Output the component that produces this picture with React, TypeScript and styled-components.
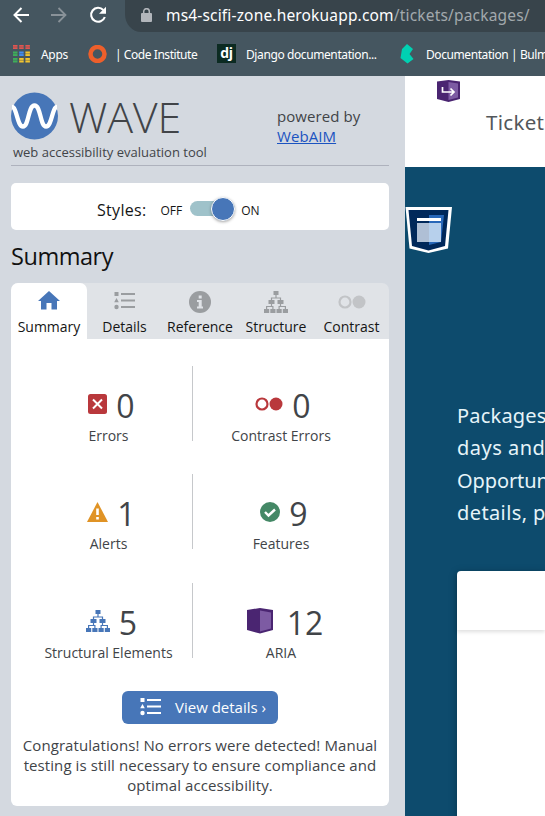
import React from "react";
import styled, { createGlobalStyle } from "styled-components";

const Global = createGlobalStyle`
  * { box-sizing: border-box; }
  body { margin: 0; overflow: hidden; font-family: "Open Sans", sans-serif; }
  h1, h2, p { margin: 0; font-weight: 400; }
  svg { display: block; flex: none; }
`;

const Window = styled.div`
  width: 545px;
  height: 816px;
  display: flex;
  flex-direction: column;
  overflow: hidden;
`;

const Chrome = styled.header`
  height: 76px;
  flex: none;
  background: #455660;
  color: #fff;
  font-family: "Noto Sans", sans-serif;
`;

const Toolbar = styled.div`
  display: flex;
  height: 32px;
  padding-left: 13px;
`;

const NavIcons = styled.div`
  display: flex;
  align-items: center;
  gap: 22px;
  width: 112px;
  height: 30px;
`;

const AddressBar = styled.div`
  flex: 1;
  display: flex;
  align-items: center;
  height: 32px;
  padding: 0 0 2px 16px;
  gap: 14px;
  background: #38444b;
  border-radius: 0 0 0 16px / 0 0 0 18px;
  white-space: nowrap;
`;

const Url = styled.span`
  font-size: 15.5px;
  letter-spacing: 0.17px;
  color: #fff;
`;

const UrlPath = styled.span`
  color: #a2a9ad;
  letter-spacing: 0.18px;
`;

const Bookmarks = styled.nav`
  display: flex;
  height: 44px;
  padding-left: 12px;
`;

const Bookmark = styled.div<{ $width: number; $gap: number; $spacing: number }>`
  display: flex;
  align-items: center;
  flex: none;
  width: ${(p) => p.$width}px;
  gap: ${(p) => p.$gap}px;
  height: 44px;
  padding-bottom: 1px;
  font-size: 12px;
  letter-spacing: ${(p) => p.$spacing}px;
  white-space: nowrap;
`;

const BookmarkLabel = styled.span`
  padding-top: 2px;
`;

const DjangoMark = styled.span`
  display: flex;
  justify-content: center;
  width: 19px;
  height: 19px;
  background: #0c2b22;
  font: 700 14px/17px "Open Sans", sans-serif;
`;

const Content = styled.div`
  display: flex;
  flex: 1;
  min-height: 0;
`;

const Sidebar = styled.aside`
  width: 405px;
  flex: none;
  padding: 0 16px 0 11px;
  background: #d4d9e0;
  color: #414448;
`;

const Brand = styled.div`
  display: flex;
  height: 90px;
  border-bottom: 1px solid #aeb2bd;
`;

const BrandLeft = styled.div`
  width: 266px;
  padding-top: 16px;
`;

const LogoRow = styled.div`
  display: flex;
  align-items: center;
  gap: 10px;
  height: 48px;
`;

const LogoName = styled.h1`
  height: 48px;
  font-size: 43px;
  font-weight: 300;
  line-height: 50px;
  letter-spacing: -0.2px;
`;

const Tagline = styled.p`
  padding-left: 2px;
  margin-top: 3px;
  font-size: 13px;
  line-height: 18px;
`;

const Powered = styled.div`
  padding-top: 30px;
  font-size: 15px;
  line-height: 20px;
  letter-spacing: 0.08px;
  white-space: nowrap;
`;

const Link = styled.a`
  display: block;
  color: #1a53c0;
  text-decoration: underline;
`;

const StylesBox = styled.section`
  display: flex;
  align-items: center;
  height: 47px;
  margin-top: 17px;
  padding: 6px 0 0 86px;
  background: #fff;
  border-radius: 5px;
  color: #151515;
  font-size: 16px;
  letter-spacing: 0.3px;
`;

const SmallLabel = styled.span<{ $left: number }>`
  margin-left: ${(p) => p.$left}px;
  padding-top: 1px;
  font-size: 12px;
  letter-spacing: 0;
`;

const Track = styled.div`
  display: flex;
  justify-content: flex-end;
  align-items: center;
  width: 45px;
  height: 15px;
  margin: -2px 0 0 8px;
  border-radius: 8px;
  background: #9fc2ca;
`;

const Knob = styled.div`
  width: 24px;
  height: 24px;
  flex: none;
  border: 1px solid #fff;
  border-radius: 50%;
  background: #4776b8;
  box-shadow: 0 1px 3px rgba(0, 0, 0, 0.35);
`;

const Heading = styled.h2`
  height: 53px;
  font-size: 23.5px;
  line-height: 53px;
  letter-spacing: -0.45px;
  color: #111;
`;

const Tabs = styled.div`
  display: grid;
  grid-template-columns: 76px 75px 76px 76px 75px;
  height: 56px;
  background: #e0e3e7;
  border-radius: 7px 7px 0 0;
`;

const Tab = styled.div<{ $active?: boolean }>`
  display: flex;
  flex-direction: column;
  align-items: center;
  padding-top: 7px;
  background: ${(p) => (p.$active ? "#fff" : "transparent")};
  border-radius: 7px 7px 0 0;
  color: #151515;
  font-size: 14px;
  line-height: 20px;
  white-space: nowrap;
`;

const TabIcon = styled.div<{ $lift?: number }>`
  display: flex;
  align-items: center;
  height: 24px;
  margin-bottom: 3px;
  padding-bottom: ${(p) => p.$lift ?? 0}px;
`;

const Panel = styled.section`
  height: 467px;
  padding-top: 27px;
  background: #fff;
  border-radius: 0 0 6px 6px;
`;

const StatRow = styled.div`
  display: grid;
  grid-template-columns: 182px 1fr;
  height: 75px;
  margin-bottom: 33.4px;
`;

const Stat = styled.div<{ $divided?: boolean }>`
  height: 75px;
  padding-top: 17px;
  padding-left: ${(p) => (p.$divided ? 13 : 14)}px;
  border-right: ${(p) => (p.$divided ? "0" : "1px solid #c6c8cb")};
  margin-right: ${(p) => (p.$divided ? 33 : 0)}px;
  text-align: center;
  font-size: 14px;
  white-space: nowrap;
`;

const StatLine = styled.div<{ $gap: number; $shift: number }>`
  display: flex;
  justify-content: center;
  align-items: center;
  gap: ${(p) => p.$gap}px;
  height: 42px;
  margin: 0 ${(p) => -p.$shift}px 0 ${(p) => p.$shift}px;
`;

const Count = styled.span`
  font-size: 32px;
  line-height: 41px;
  padding-top: 3px;
`;

const StatLabel = styled.div`
  padding-top: 1px;
  line-height: 20px;
`;

const DetailsButton = styled.button`
  display: flex;
  align-items: center;
  gap: 14px;
  width: 156px;
  height: 33px;
  margin: 0 0 0 111px;
  padding: 0 0 2px 18px;
  border: 0;
  border-radius: 6px;
  background: #4776b8;
  color: #fff;
  font: 15px "Open Sans", sans-serif;
  white-space: nowrap;
`;

const Message = styled.p`
  margin: 11px -2px 0;
  text-align: center;
  font-size: 15px;
  line-height: 20px;
  letter-spacing: 0.08px;
  white-space: nowrap;
`;

const Site = styled.main`
  position: relative;
  flex: 1;
  min-width: 0;
  background: #0d4b6d;
  overflow: hidden;
  white-space: nowrap;
`;

const SiteNav = styled.div`
  height: 91px;
  padding: 31px 0 0 81px;
  background: #fff;
  color: #53575b;
  font: 20.5px/30px "Noto Sans", sans-serif;
  letter-spacing: 0.3px;
`;

const Marker = styled.div<{ $x: number; $y: number }>`
  position: absolute;
  left: ${(p) => p.$x}px;
  top: ${(p) => p.$y}px;
`;

const Intro = styled.p`
  height: 130px;
  margin: 233px 0 0 52px;
  color: #e6f4f9;
  font: 20px/32.4px "Noto Sans", sans-serif;
`;

const IntroLine = styled.span<{ $spacing: number }>`
  display: block;
  letter-spacing: ${(p) => p.$spacing}px;
`;

const Card = styled.div`
  height: 300px;
  margin: 41px 0 0 52px;
  background: #fff;
  border-radius: 4px 0 0 0;
  box-shadow: 0 2px 9px rgba(0, 0, 0, 0.28);
`;

const CardHeader = styled.div`
  height: 59px;
  box-shadow: 0 2px 4px rgba(0, 0, 0, 0.13);
`;

const ListIcon = ({ color }: { color: string }) => (
  <svg width="21" height="19" viewBox="0 0 21 19" fill={color}>
    <path d="M.5 1h4v4h-4zM2.500 7l2.300 4.200H.2zM7 2h14v2H7zM7 8.500h14v2H7zM7 15h14v2H7z" />
    <circle cx="2.500" cy="16" r="2.200" />
  </svg>
);

const TreeIcon = ({ color }: { color: string }) => (
  <svg width="24" height="22" viewBox="0 0 24 22" fill={color}>
    <path d="M9.500 0h5v4h-5zM4.500 9h6v4h-6zM13.500 9h6v4h-6zM0 18h5.200v4H0zM6.300 18h5.200v4H6.300zM12.500 18h5.200v4h-5.200zM18.800 18H24v4h-5.200z" />
    <path d="M12 4v3M7.500 10V7h9v3M7.500 13v2.500M2.600 18v-2.500h6.300V18M16.500 13v2.500M15.100 18v-2.500h6.300V18" fill="none" stroke={color} strokeWidth="1.200" />
  </svg>
);

const ContrastIcon = ({ ring, fill }: { ring: string; fill: string }) => (
  <svg width="28" height="14" viewBox="0 0 28 14">
    <circle cx="7" cy="7" r="5.500" fill="none" stroke={ring} strokeWidth="2.200" />
    <circle cx="21" cy="7" r="6.500" fill={fill} />
  </svg>
);

const BackIcon = () => (
  <svg width="16" height="16" viewBox="0 0 16 16" fill="none" stroke="#fff" strokeWidth="2">
    <path d="M16 8H2M8.500 1L1.500 8l7 7" />
  </svg>
);

const ForwardIcon = () => (
  <svg width="16" height="16" viewBox="0 0 16 16" fill="none" stroke="#899299" strokeWidth="1.800">
    <path d="M0 8h14M7.500 1l7 7-7 7" />
  </svg>
);

const ReloadIcon = () => (
  <svg width="18" height="18" viewBox="0 0 18 18">
    <path d="M14.300 4A7 7 0 1 0 15.800 11" fill="none" stroke="#fff" strokeWidth="2.100" />
    <path d="M17 .8v7h-7z" fill="#fff" />
  </svg>
);

const LockIcon = () => (
  <svg width="11" height="14" viewBox="0 0 11 14">
    <path d="M2.700 6V3.500a2.800 2.800 0 0 1 5.600 0V6" fill="none" stroke="#b2b6bb" strokeWidth="1.500" />
    <rect y="5" width="11" height="9" rx="1" fill="#b2b6bb" />
  </svg>
);

const AppsIcon = () => (
  <svg width="19" height="18" viewBox="0 0 19 18">
    <path d="M1 0h4.500v4H1zM7.200 0h4.500v4H7.200zM13.400 0h4.500v4h-4.500z" fill="#e15550" />
    <path d="M1 6.500h4.500v4.500H1zM1 13h4.500v4.500H1z" fill="#3fae5a" />
    <path d="M7.200 6.500h4.500v4.500H7.200z" fill="#438df0" />
    <path d="M7.200 13h4.500v4.500H7.200zM13.400 6.500h4.500v4.500h-4.500zM13.400 13h4.500v4.500h-4.500z" fill="#f3c52f" />
    <path d="M1 2h17M1 8.700h17M1 15.300h17" stroke="#455660" strokeWidth=".7" opacity=".65" />
  </svg>
);

const WaveLogo = () => (
  <svg width="48" height="48" viewBox="0 0 48 48">
    <circle cx="23.500" cy="24" r="23.500" fill="#4776b8" />
    <path d="M1 15C6 15 6 34.500 12 34.500C18 34.500 17 13.500 23.500 13.500C30 13.500 29 34.500 35 34.500C41 34.500 41 15 46 15" fill="none" stroke="#fff" strokeWidth="4.300" />
  </svg>
);

const App = () => (
  <Window>
    <Global />
    <Chrome>
      <Toolbar>
        <NavIcons>
          <BackIcon />
          <ForwardIcon />
          <ReloadIcon />
        </NavIcons>
        <AddressBar>
          <LockIcon />
          <Url>ms4-scifi-zone.herokuapp.com<UrlPath>/tickets/packages/</UrlPath></Url>
        </AddressBar>
      </Toolbar>
      <Bookmarks>
        <Bookmark $width={76} $gap={10} $spacing={-0.3}><AppsIcon /><BookmarkLabel>Apps</BookmarkLabel></Bookmark>
        <Bookmark $width={129} $gap={8} $spacing={-0.44}>
          <svg width="19" height="18" viewBox="0 0 19 18"><circle cx="9.500" cy="9" r="7" fill="none" stroke="#ed5f2b" strokeWidth="4.500" /></svg>
          <BookmarkLabel>| Code Institute</BookmarkLabel>
        </Bookmark>
        <Bookmark $width={183} $gap={10} $spacing={-0.4}><DjangoMark>dj</DjangoMark><BookmarkLabel>Django documentation...</BookmarkLabel></Bookmark>
        <Bookmark $width={145} $gap={12} $spacing={-0.42}>
          <svg width="14" height="20" viewBox="0 0 14 20"><path d="M.5 14L2 5l5-5 6 5-3.500 5 4 5-6 4.500z" fill="#00d1b2" /></svg>
          <BookmarkLabel>Documentation | Bulm</BookmarkLabel>
        </Bookmark>
      </Bookmarks>
    </Chrome>
    <Content>
      <Sidebar>
        <Brand>
          <BrandLeft>
            <LogoRow><WaveLogo /><LogoName>WAVE</LogoName></LogoRow>
            <Tagline>web accessibility evaluation tool</Tagline>
          </BrandLeft>
          <Powered>powered by<Link>WebAIM</Link></Powered>
        </Brand>
        <StylesBox>
          <span>Styles:</span>
          <SmallLabel $left={14}>OFF</SmallLabel>
          <Track><Knob /></Track>
          <SmallLabel $left={6}>ON</SmallLabel>
        </StylesBox>
        <Heading>Summary</Heading>
        <Tabs>
          <Tab $active>
            <TabIcon $lift={3}><svg width="22" height="19" viewBox="0 0 22 19"><path d="M11 0l11 10h-3v8.500h-5.500V12h-5v6.500H3V10H0z" fill="#4776b8" /></svg></TabIcon>
            Summary
          </Tab>
          <Tab><TabIcon $lift={4}><ListIcon color="#9a9da0" /></TabIcon>Details</Tab>
          <Tab>
            <TabIcon><svg width="22" height="22" viewBox="0 0 22 22"><circle cx="11" cy="11" r="11" fill="#9a9da0" /><path d="M9.700 4.500h3v3h-3zM8 9h4.700v6.500H14v2H8v-2h1.700V11H8z" fill="#e0e3e7" /></svg></TabIcon>
            Reference
          </Tab>
          <Tab><TabIcon $lift={1}><TreeIcon color="#9a9da0" /></TabIcon>Structure</Tab>
          <Tab><TabIcon><ContrastIcon ring="#c2c4c7" fill="#c2c4c7" /></TabIcon>Contrast</Tab>
        </Tabs>
        <Panel>
          <StatRow>
            <Stat>
              <StatLine $gap={9} $shift={3}>
                <svg width="19" height="20" viewBox="0 0 19 20"><rect width="19" height="20" rx="2.500" fill="#b9383c" /><path d="M5 5.500l9 9M14 5.500l-9 9" stroke="#fff" strokeWidth="2" /></svg>
                <Count>0</Count>
              </StatLine>
              <StatLabel>Errors</StatLabel>
            </Stat>
            <Stat $divided>
              <StatLine $gap={9} $shift={2}><ContrastIcon ring="#b9383c" fill="#b9383c" /><Count>0</Count></StatLine>
              <StatLabel>Contrast Errors</StatLabel>
            </Stat>
          </StatRow>
          <StatRow>
            <Stat>
              <StatLine $gap={9} $shift={3}>
                <svg width="21" height="20" viewBox="0 0 21 20"><path d="M10.500 0L21 20H0z" fill="#e09325" /><path d="M9.200 6.500h2.600v6.500H9.200zM9.200 15h2.600v2.500H9.200z" fill="#fff" /></svg>
                <Count>1</Count>
              </StatLine>
              <StatLabel>Alerts</StatLabel>
            </Stat>
            <Stat $divided>
              <StatLine $gap={9} $shift={3}>
                <svg width="20" height="20" viewBox="0 0 20 20"><circle cx="10" cy="10" r="10" fill="#448866" /><path d="M5 10l3.500 3.500 6.500-6" fill="none" stroke="#fff" strokeWidth="2.400" /></svg>
                <Count>9</Count>
              </StatLine>
              <StatLabel>Features</StatLabel>
            </Stat>
          </StatRow>
          <StatRow>
            <Stat>
              <StatLine $gap={9} $shift={3}><TreeIcon color="#4776b8" /><Count>5</Count></StatLine>
              <StatLabel>Structural Elements</StatLabel>
            </Stat>
            <Stat $divided>
              <StatLine $gap={14} $shift={4}>
                <svg width="26" height="26" viewBox="0 0 26 26"><path d="M0 2L13 0l13 2v20l-13 3.500L0 22z" fill="#4a2571" /><path d="M13 2.500l11 2v16L13 23.500z" fill="#7d5ba3" /></svg>
                <Count>12</Count>
              </StatLine>
              <StatLabel>ARIA</StatLabel>
            </Stat>
          </StatRow>
          <DetailsButton><ListIcon color="#fff" />View details ›</DetailsButton>
          <Message>Congratulations! No errors were detected! Manual<br />testing is still necessary to ensure compliance and<br />optimal accessibility.</Message>
        </Panel>
      </Sidebar>
      <Site>
        <SiteNav>Ticket</SiteNav>
        <Intro>
          <IntroLine $spacing={0.2}>Packages</IntroLine>
          <IntroLine $spacing={0.5}>days and</IntroLine>
          <IntroLine $spacing={-0.1}>Opportun</IntroLine>
          <IntroLine $spacing={0.4}>details, p</IntroLine>
        </Intro>
        <Card><CardHeader /></Card>
        <Marker $x={32} $y={4}>
          <svg width="23" height="22" viewBox="0 0 23 22"><path d="M0 1.500L11.500 0 23 1.500V19l-11.500 3L0 19z" fill="#4a2571" /><path d="M11.500 2L21 3.500v14L11.500 20z" fill="#7d5ba3" /><path d="M5.500 7v5h11M13.500 8.500l3.500 3.500-3.500 3.500" fill="none" stroke="#fff" strokeWidth="1.700" /></svg>
        </Marker>
        <Marker $x={0} $y={131}>
          <svg width="47" height="46" viewBox="0 0 47 46"><path d="M.5 0H47l-4 41.500L23.500 46 4.500 41.500z" fill="#fff" /><path d="M3.500 3h40L40 39l-16.500 4.500L7 39z" fill="#00285a" /><path d="M24 8h15l-3 27-12 3z" fill="#2867b8" /><path d="M12 11h24v3H12z" fill="#fff" /><path d="M12 16h12v19H12z" fill="#afbfd5" /><path d="M24 16h12v19H24z" fill="#b7d0ec" /></svg>
        </Marker>
      </Site>
    </Content>
  </Window>
);

export default App;
